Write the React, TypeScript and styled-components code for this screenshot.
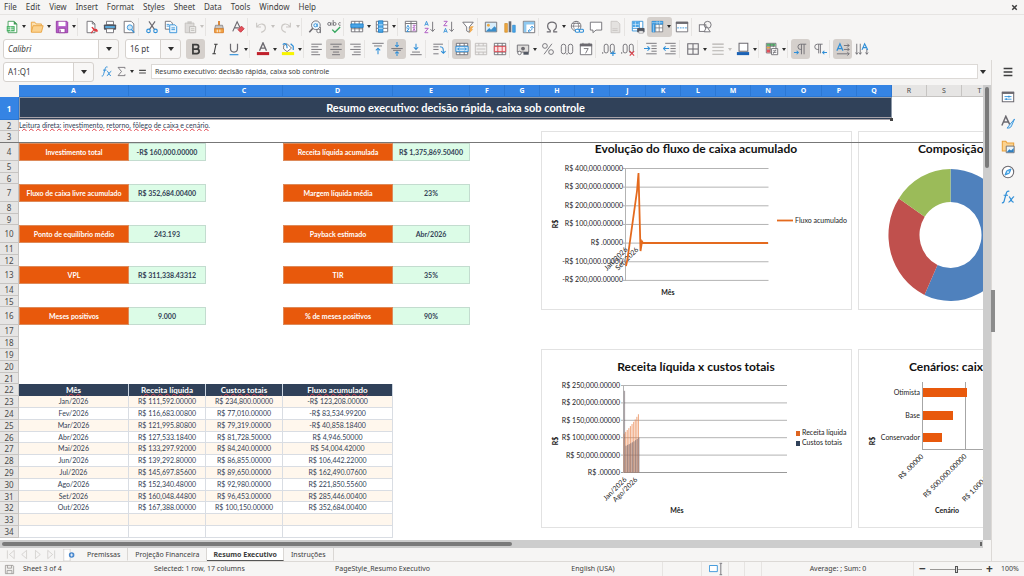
import React from "react";
import styled, { createGlobalStyle, css } from "styled-components";

const UI_FONT = '"Noto Sans", "Open Sans", sans-serif';
const CELL_FONT = 'Lato, "Open Sans", sans-serif';

const GlobalStyle = createGlobalStyle`
  * { box-sizing: border-box; }
  body { margin: 0; background: #f6f5f4; color: #3d3d3d; font-family: ${UI_FONT}; font-size: 8px; line-height: 12px; }
  button, input, select { font: inherit; color: inherit; margin: 0; }
`;

/* ---------- icons ---------- */

const G = "#6c6a70";
const B = "#2f8fd8";

const icons: Record<string, React.ReactNode> = {
  newDoc: (<><path d="M3.500 1.500h7l3 3v10h-10z" fill="#fff" stroke="#3f9a55" /><path d="M10 1l4 4h-4z" fill="#3f9a55" /><path d="M2 7h9v6H2z" fill="#3fae5c" /><path d="M3 9h7M3 11h7M6.500 7.500v5" stroke="#fff" strokeWidth=".8" /></>),
  open: (<><path d="M1.500 13.500v-11h4l1.500 2h6v2" fill="#fbe0b0" stroke="#e9a13b" /><path d="M3.500 6.500h11.500l-2 7.500h-11.500z" fill="#fbd28f" stroke="#e9a13b" /></>),
  save: (<><path d="M1.500 1.500h12l1 1v12h-13z" fill="#b45cc9" stroke="#93389f" /><path d="M4 2h8v5H4z" fill="#fff" /><path d="M4.500 9.500h7v5h-7z" fill="#fff" stroke="#93389f" /><path d="M6 11v3" stroke="#93389f" /></>),
  pdf: (<><path d="M3.500 14.500v-13h6l3 3v10z" fill="#fff" stroke={G} /><path d="M9.500 1.500v3h3" fill="none" stroke={G} /><path d="M8 15c4-5 6-5 7-3s-4 0-6-4" fill="none" stroke="#e0383e" strokeWidth="1.300" /></>),
  print: (<><path d="M4 1.500h8v4H4z" fill="#fff" stroke={G} /><rect x="1" y="5" width="14" height="6" rx="1" fill="#4f5560" /><path d="M2.500 8h11" stroke="#5cb5ec" strokeWidth="2" /><path d="M4 10h8v4.500H4z" fill="#fff" stroke={G} /></>),
  preview: (<><path d="M2.500 1.500h8l3 3v10h-11z" fill="#fff" stroke={G} /><circle cx="9" cy="8.500" r="3" fill="#cfe8f8" stroke={B} /><path d="M11 11l3 3.500" stroke={B} strokeWidth="1.500" /></>),
  cut: (<><path d="M4.500 1.500L11 11M11.500 1.500L5 11" stroke={G} strokeWidth="1.300" /><circle cx="4" cy="12.500" r="2" fill="none" stroke={B} strokeWidth="1.300" /><circle cx="12" cy="12.500" r="2" fill="none" stroke={B} strokeWidth="1.300" /></>),
  copy: (<><path d="M1.500 1.500h6l2 2v7h-8z" fill="#fff" stroke={G} /><path d="M6.500 5.500h6l2 2v7h-8z" fill="#e9f5fd" stroke={B} /><path d="M8.500 9h4M8.500 11h4M3 5h3M3 7h3" stroke={B} /></>),
  paste: (<><path d="M2.500 3.500h10v11h-10z" fill="#dddbd9" stroke="#c2c0bd" /><path d="M5 1.500h5v3H5z" fill="#c9c7c4" /><path d="M7.500 7.500h7v7h-7z" fill="#eeedeb" stroke="#bab8b5" /><path d="M9 10h4M9 12h4" stroke="#c2c0bd" /></>),
  clone: (<><path d="M8 1v5" stroke="#d97b22" strokeWidth="2" /><path d="M4 6h8l1 4H3z" fill="#c8c5c1" stroke={G} strokeWidth=".7" /><path d="M3 10h10v4.500H3z" fill="#f3a64a" stroke="#d97b22" /><path d="M6 11v3M9 11v3" stroke="#fff" /></>),
  clear: (<><path d="M2 13L7 2l4 8M4 9h5" fill="none" stroke={G} strokeWidth="1.300" /><path d="M8 11l4-4 3 3-4 4z" fill="#e4505a" stroke="#c4303a" /></>),
  undo: (<path d="M3 3v5h5M3.500 7.500C7 3 13 4 13 9c0 3-3 5-5 5" fill="none" stroke="#cbc8c5" strokeWidth="1.300" />),
  redo: (<path d="M13 3v5H8M12.500 7.500C9 3 3 4 3 9c0 3 3 5 5 5" fill="none" stroke="#cbc8c5" strokeWidth="1.300" />),
  find: (<><circle cx="9" cy="6" r="5" fill="#eef7fd" stroke={G} /><path d="M5.500 9.500L1.500 14" stroke={G} strokeWidth="1.800" /><circle cx="8.500" cy="6" r="1.800" fill="none" stroke={B} /><path d="M10.500 4v4" stroke={B} /><circle cx="12" cy="12.500" r="2" fill="#fff" stroke={G} /><path d="M14.200 8v7" stroke={G} /></>),
  spell: (<><circle cx="2.500" cy="4.500" r="1.700" fill="none" stroke={G} /><path d="M4.500 2.500v4M7 0v6.500" stroke={G} /><circle cx="8.700" cy="4.500" r="1.700" fill="none" stroke={G} /><path d="M15.500 3.200c-3-1.500-3 4 0 2.800" fill="none" stroke={G} /><path d="M6 11l3 3 6-6" fill="none" stroke="#38a860" strokeWidth="1.600" /></>),
  row: (<><path d="M1.500 1.500h13v12h-13zM1.500 10h13M5.500 1.500v12M10.500 1.500v12" fill="#fff" stroke={G} /><path d="M1 4.500h14v4H1z" fill="#4aa6e8" stroke="#1f7fc7" /></>),
  col: (<><path d="M1.500 1.500h13v12h-13zM1.500 5.500h13M1.500 9.500h13" fill="#fff" stroke={G} /><path d="M4 1h5v13H4z" fill="#4aa6e8" stroke="#1f7fc7" /><path d="M4 5.500h5M4 9.500h5" stroke="#bfe0f7" /></>),
  sort: (<><path d="M1.500 1.500h13v12h-13zM8 1.500v12M1.500 4h13" fill="#fff" stroke={G} /><path d="M3 9l1.500-3L6 9M3 10h3l-3 3h3" fill="none" stroke={B} /><path d="M10 6h3l-3 3h3M10 13l1.500-3L13 13" fill="none" stroke="#a94fc0" /></>),
  asc: (<><path d="M2 6.500L4 1.500l2 5M2.800 5h2.500" fill="none" stroke={B} /><path d="M2 9.500h4l-4 5h4" fill="none" stroke="#a94fc0" /><path d="M11 2v11M8.500 10.500L11 13l2.500-2.500" fill="none" stroke={G} /></>),
  desc: (<><path d="M2 1.500h4l-4 5h4" fill="none" stroke="#a94fc0" /><path d="M2 14.500l2-5 2 5M2.800 13h2.500" fill="none" stroke={B} /><path d="M11 2v11M8.500 10.500L11 13l2.500-2.500" fill="none" stroke={G} /></>),
  filter: (<><path d="M2 2.500h12L9.500 8v6l-3-1.500V8z" fill="#fff" stroke={G} /><path d="M11 7h3.500L12 10.500h2L9.500 15l1-3.500H9z" fill="#f2ab4e" /></>),
  image: (<><path d="M1.500 2.500h13v11h-13z" fill="#d8edfa" stroke={G} /><circle cx="5" cy="6" r="1.600" fill="#f0a840" /><path d="M2 13l4-4 2 2 4-4 2 2v4z" fill="#3a8ecb" /></>),
  chart: (<><path d="M2 4h3v10H2z" fill="#f0a840" stroke="#c98320" strokeWidth=".7" /><path d="M6.500 1.500h3V14h-3z" fill="#6a6a70" /><path d="M11 6h3v8h-3z" fill="#4aa6e8" stroke="#1f7fc7" strokeWidth=".7" /></>),
  pivot: (<><path d="M1.500 1.500h13v13h-13z" fill="#fff" stroke={G} /><path d="M2 2h12v3H2zM2 5h3v9H2z" fill="#8fc9f0" /><path d="M7.500 12.500c4 0 4-2 4-5M9.500 9l2-2 2 2M9 10.500l-2 2 2 2" fill="none" stroke={B} /></>),
  omega: (<path d="M2 13.500h4V12C1.500 9 2 2.500 8 2.500S14.500 9 10 12v1.500h4" fill="none" stroke={G} strokeWidth="1.300" />),
  link: (<><circle cx="7" cy="7" r="5.500" fill="#fff" stroke={G} /><path d="M1.500 7h11M7 1.500c-4 4-4 7 0 11M7 1.500c4 4 4 7 0 11M2.500 4h9" fill="none" stroke={G} strokeWidth=".8" /><rect x="6" y="10.500" width="5" height="3.500" rx="1.700" fill="#fff" stroke={B} strokeWidth="1.200" /><rect x="10.500" y="10.500" width="5" height="3.500" rx="1.700" fill="none" stroke={B} strokeWidth="1.200" /></>),
  comment: (<path d="M1.500 2.500h13v9H8L4.500 14.500v-3h-3z" fill="#fff" stroke={G} />),
  headerFooter: (<path d="M3.500 1.500h7l3 3v10h-10zM5 10h6M5 12h6" fill="#e4e2e0" stroke="#c9c6c3" />),
  printArea: (<><path d="M1.500 1.500h12v11h-12zM1.500 9.500h12M9.500 1.500v11" fill="#fff" stroke={B} /><path d="M2 2h7v6H2z" fill="#4aa6e8" /><path d="M5 2v6M2 5h7" stroke="#fff" strokeWidth=".6" /><rect x="7" y="9" width="8.500" height="5" rx="1" fill="#4f5560" /><path d="M9 12.500h5v2.500H9z" fill="#fff" stroke={G} strokeWidth=".6" /></>),
  freeze: (<><path d="M2.500 1.500h12v12h-12zM2.500 5h12M2.500 9h12M6.500 1.500v12M10.500 1.500v12" fill="#fff" stroke={G} strokeWidth=".8" /><path d="M2 1h13v4H6v9H2z" fill="#3d97dc" /><path d="M2 3h12M4 5v9M8 1v4M11 1v4" stroke="#b9dcf5" strokeWidth=".7" /></>),
  split: (<><path d="M1.500 2.500h13v11h-13z" fill="#fff" stroke={G} /><path d="M1 2h14v2.500H1z" fill={G} /><path d="M2.500 9h11" stroke={B} strokeDasharray="2 1" /></>),
  shapes: (<><rect x="1.500" y="5.500" width="7.500" height="7.500" fill="#fff" stroke={G} /><circle cx="11" cy="5.500" r="4" fill="none" stroke={G} /><path d="M7 13.500l3-6 4 6z" fill="#fff" stroke={G} /></>),

  bold: (<path d="M4.500 3h4a2.500 2.500 0 010 5h-4zM4.500 8h4.500a2.600 2.600 0 010 5.200H4.500z" fill="none" stroke="#3d3d3d" strokeWidth="2" />),
  italic: (<path d="M7 2.500h4M5 13.500h4M9.200 2.500L6.800 13.500" stroke="#3d3d3d" strokeWidth="1.200" fill="none" />),
  underline: (<><path d="M4 2v5.500a4 4 0 008 0V2" fill="none" stroke={G} strokeWidth="1.400" /><path d="M3 14.500h10" stroke={B} strokeWidth="1.300" /></>),
  fontColor: (<><path d="M4 10L8 1l4 9M5.500 7h5" fill="none" stroke={G} strokeWidth="1.600" /><path d="M1 11.500h14v3.500H1z" fill="#c0202c" /></>),
  highlight: (<><path d="M1 11.500h14v3.500H1z" fill="#f8f400" /><path d="M3 4l4-2 5 5-5 4-4-3z" fill="#fff" stroke={G} /><path d="M2 3c3-3 5 0 5 4M11 2l3 3v4" fill="none" stroke={B} strokeWidth="1.400" /></>),
  left: (<path d="M1.500 2.500h12M1.500 5.500h8M1.500 8.500h12M1.500 11.500h8M1.500 14.500h10" stroke={G} />),
  center: (<path d="M1.500 2.500h13M4.500 5.500h7M1.500 8.500h13M4.500 11.500h7M3.500 14.500h9" stroke={G} />),
  right: (<path d="M2.500 2.500h12M6.500 5.500h8M2.500 8.500h12M6.500 11.500h8M4.500 14.500h10" stroke={G} />),
  top: (<><path d="M1.500 1.500h13M3.500 4.500h9" stroke={G} /><path d="M8 14V7M5.500 9.500L8 7l2.500 2.500" fill="none" stroke={B} strokeWidth="1.200" /></>),
  middle: (<><path d="M1.500 7.500h13M3.500 9.500h9" stroke={G} /><path d="M8 0v5M6 3.500L8 5.500l2-2M8 16v-4M6 13l2-2 2 2" fill="none" stroke={B} strokeWidth="1.200" /></>),
  bottom: (<><path d="M1.500 14.500h13M3.500 11.500h9" stroke={G} /><path d="M8 2v6M5.500 6L8 8.500 10.500 6" fill="none" stroke={B} strokeWidth="1.200" /></>),
  wrap: (<><path d="M1.500 2.500h11M1.500 5.500h6M1.500 8.500h6M1.500 13.500h6" stroke={G} /><path d="M9 5.500c4 0 4 2 4 7M10.500 10.500L13 13l2.500-2.500" fill="none" stroke={B} strokeWidth="1.200" /></>),
  mergeCenter: (<><path d="M1.500 1.500h13v13h-13zM1.500 4.500h13M1.500 11.500h13M5.500 1.500v3M10.500 1.500v3M5.500 11.500v3M10.500 11.500v3" fill="#fff" stroke={G} /><path d="M1 5h14v6H1z" fill="#d4ebfa" stroke={B} /><path d="M3 8h10M5 6.500L3 8l2 1.500M11 6.500L13 8l-2 1.500" fill="none" stroke={B} /></>),
  merge: (<path d="M1.500 1.500h13v13h-13zM1.500 4.500h13M1.500 11.500h13M5.500 1.500v3M10.500 1.500v3M5.500 11.500v3M10.500 11.500v3M3 8h10" fill="#f1f0ef" stroke="#bfbcb9" />),
  unmerge: (<><path d="M1.500 1.500h13v13h-13zM1.500 4.500h13M1.500 11.500h13M5.500 1.500v3M10.500 1.500v3M5.500 11.500v3M10.500 11.500v3" fill="#fff" stroke={G} /><path d="M1.500 5h13v6h-13zM5.500 5v6M10.500 5v6" fill="#fbe0e0" stroke="#d9404a" /></>),
  currency: (<><path d="M1.500 3.500h13v8h-13z" fill="#e0dedc" stroke={G} /><circle cx="8" cy="7.500" r="2.200" fill={G} /><path d="M8.500 11.500h6v3h-6z" fill="#4f5560" /><circle cx="4" cy="12.500" r="2" fill="#fff" stroke={G} /></>),
  percent: (<><circle cx="4.500" cy="4.500" r="2.700" fill="none" stroke={G} /><circle cx="11.500" cy="11.500" r="2.700" fill="none" stroke={G} /><path d="M12.500 2l-9 12" stroke={G} /></>),
  number: (<><rect x="1.500" y="2.500" width="5" height="11" rx="2.500" fill="none" stroke={G} /><rect x="9.500" y="2.500" width="5" height="11" rx="2.500" fill="none" stroke={G} /><path d="M8 12.500v2" stroke={G} /></>),
  date: (<><path d="M1.500 2.500h13v12h-13z" fill="#fff" stroke={G} /><path d="M1 2h14v3H1z" fill={G} /><path d="M5.500 7.500h5l-3 5.500M4.500 1v2M11.500 1v2" fill="none" stroke={G} /></>),
  addDec: (<><path d="M.8 11.500v2" stroke={G} /><rect x="2.500" y="2.500" width="4.500" height="10" rx="2.200" fill="none" stroke={G} /><rect x="9.500" y="2.500" width="4.500" height="10" rx="2.200" fill="none" stroke={G} /><path d="M12.500 10v6M9.500 13h6" stroke={B} strokeWidth="1.300" /></>),
  delDec: (<><path d="M.8 11.500v2" stroke={G} /><rect x="2.500" y="2.500" width="4.500" height="10" rx="2.200" fill="none" stroke={G} /><rect x="9.500" y="2.500" width="4.500" height="10" rx="2.200" fill="none" stroke={G} /><path d="M10 10.500l5 5M15 10.500l-5 5" stroke="#d9404a" strokeWidth="1.300" /></>),
  indent: (<><path d="M2.500 1.500h12M8.500 4.500h6M8.500 7.500h6M8.500 10.500h6M2.500 13.500h12" stroke={G} /><path d="M0 7.500h6M4 5l2.500 2.500L4 10" fill="none" stroke={B} strokeWidth="1.200" /></>),
  outdent: (<><path d="M2.500 1.500h12M8.500 4.500h6M8.500 7.500h6M8.500 10.500h6M2.500 13.500h12" stroke={G} /><path d="M7 7.500H1M3 5L.5 7.500 3 10" fill="none" stroke={B} strokeWidth="1.200" /></>),
  borders: (<path d="M2 2h12v12H2zM8 2v12M2 8h12" fill="none" stroke={G} strokeWidth="1.200" />),
  lineStyle: (<path d="M1.500 2.500h13M1.500 6h13M1.500 10h13M1.500 14h13" stroke="#b5b2af" strokeWidth="1.400" />),
  borderColor: (<><path d="M3.500 1.500h10v9h-10z" fill="#fff" stroke={G} strokeWidth="1.200" /><path d="M1 11.500h14v3.500H1z" fill="#1b62b5" /></>),
  conditional: (<><path d="M1.500 1.500h11v11h-11z" fill="#fff" stroke={G} /><path d="M2 2h10v2.500H2z" fill="#57b46e" /><path d="M2 5.500h4v2H2z" fill="#f0a840" /><path d="M2 8.500h4v3.500H2z" fill="#e4505a" /><path d="M6 2v10M9.500 2v4M2 8h5M2 5h10" stroke={G} strokeWidth=".8" /><path d="M7.500 7.500h7v7h-7z" fill="#fff" stroke={G} /><path d="M9 10h4M9 12h4M12.500 8.500l-3 5" stroke={G} strokeWidth=".8" /></>),
  ltr: (<><path d="M8.500 14V2.500M11.500 14V2.500M14 2.500H7.500a3 3 0 000 6h1" fill="none" stroke={G} /><path d="M0 12h5M3 10l2 2-2 2" fill="none" stroke={B} strokeWidth="1.200" /></>),
  rtl: (<><path d="M6.500 13V2.500M8.500 13V2.500M11 2.500H5a3 3 0 000 6h1.500" fill="none" stroke={G} /><path d="M16 12h-5M13 10l-2 2 2 2" fill="none" stroke={B} strokeWidth="1.200" /></>),
  textHoriz: (<><path d="M1 10L4.500 2 8 10M2.300 7.500h4.500" fill="none" stroke={B} strokeWidth="1.400" /><path d="M9 4h6M13 2l2 2-2 2M9 8.500h6M13 6.500l2 2-2 2M1 13.500h14M13 11.500l2 2-2 2" fill="none" stroke={G} /></>),
  textVert: (<><path d="M2 2v12M.5 12L2 14l1.500-2M6 2v12M4.500 12L6 14l1.500-2M13.500 8v6M12 12l1.500 2 1.500-2" fill="none" stroke={G} /><path d="M8 9l3-7 3.500 7M9.200 6.500h4" fill="none" stroke={B} strokeWidth="1.300" /></>),

  burger: (<path d="M3 4h10M3 8h10M3 12h10" stroke="#3d3d3d" strokeWidth="1.600" />),
  properties: (<><path d="M1.500 2.500h13v11h-13z" fill="#fff" stroke={G} strokeWidth="1.200" /><path d="M1 2h14v2.500H1z" fill={G} /><path d="M4 7.500h8M4 10.500h8" stroke={B} /><path d="M9 6.500v2M6 9.500v2" stroke={B} strokeWidth="1.400" /></>),
  styles: (<><path d="M1 12L5.500 1.500 10 11M3 8h5.500" fill="none" stroke={G} strokeWidth="1.700" /><path d="M15.500 4.500L10 11l-3 4c3 0 4-.5 5-2.500z" fill="#d4ebfa" stroke={B} /></>),
  gallery: (<><path d="M1.500 12.500v-11h4l1.500 2h7.500v9z" fill="#fbd28f" stroke="#e9a13b" strokeWidth="1.200" /><path d="M6 7h9v7.500H6z" fill="#e9f5fd" stroke={G} /><path d="M6.500 14l3-3.500 2 1.500 3-3v5z" fill="#2f7fc0" /></>),
  navigator: (<><circle cx="8" cy="8" r="6.500" fill="#fff" stroke={G} strokeWidth="1.200" /><path d="M11.500 4.500L9.500 9.500 4.500 11.500 6.500 6.500z" fill="#5cb5ec" stroke={B} /><circle cx="8" cy="8" r="1" fill="#fff" /></>),
  fx: (<path d="M1 14.500c2 .5 2.500-1 3-3.500L6 4c.5-2.500 1.500-3 3.500-2.500M3 6h5M9 7.500c2 0 2 6.500 5.500 6.500M15 7.500c-2 0-4 6.500-6.500 6.500" fill="none" stroke={B} strokeWidth="1.400" />),
  sum: (<path d="M13 4V2H3l5 6-5 6h10v-2" fill="none" stroke={G} strokeWidth="1.200" />),
  equals: (<path d="M2 6h12M2 10.500h12" stroke="#4a4a4a" strokeWidth="1.800" />),
  diskGrey: (<><path d="M2 2h11l1 1v11H2z" fill="#efeeec" stroke="#8d8a87" /><path d="M5 2v4h6V2M4.500 14V9.500h7V14" fill="none" stroke="#8d8a87" /></>),
  first: (<path d="M2 2v12M12 2L5 8l7 6z" fill="none" stroke="#c9c6c3" />),
  prev: (<path d="M11 2L4 8l7 6z" fill="none" stroke="#c9c6c3" />),
  next: (<path d="M5 2l7 6-7 6z" fill="none" stroke="#c9c6c3" />),
  last: (<path d="M14 2v12M4 2l7 6-7 6z" fill="none" stroke="#c9c6c3" />),
  addSheet: (<><path d="M1 0h8.500v16H1z" fill="#fff" stroke="#cfccc9" /><circle cx="11.500" cy="8" r="3.700" fill="#4384cc" /><path d="M9.500 8h4M11.500 6v4" stroke="#fff" strokeWidth="1.100" /></>),
  selectMode: (<><path d="M.5 4h9v7h-9z" fill="#fff" stroke={B} /><path d="M13.500 2v12M12 1.500h3M12 14.500h3" stroke={G} fill="none" /></>),
  close: (<path d="M4 4l8 8M12 4l-8 8" stroke="#3d3d3d" strokeWidth="2.600" />),
};

const IconSvg = styled.svg<{ $size: number }>`
  display: block;
  flex: none;
  width: ${(p) => p.$size}px;
  height: ${(p) => p.$size}px;
`;

const Icon = ({ name, size = 14 }: { name: string; size?: number }) => (
  <IconSvg $size={size} viewBox="0 0 16 16" aria-hidden="true">{icons[name]}</IconSvg>
);

/* ---------- chrome ---------- */

const Shell = styled.div`
  display: flex;
  flex-direction: column;
  height: 100vh;
  overflow: hidden;
`;

const MenuBar = styled.nav`
  display: flex;
  align-items: center;
  height: 15px;
  padding-right: 5px;
  border-bottom: 1px solid #e6e4e2;
`;

const MenuItem = styled.button`
  border: 0;
  background: none;
  padding: 0 5px 0 4px;
  line-height: 14px;
`;

const PlainButton = styled.button`
  display: flex;
  align-items: center;
  justify-content: center;
  padding: 0;
  border: 0;
  background: none;
`;

const CloseButton = styled(PlainButton)`
  margin-left: auto;
`;

const ToolBar = styled.div<{ $h: number }>`
  display: flex;
  align-items: center;
  height: ${(p) => p.$h}px;
  flex: none;
  padding-left: 2px;
`;

const ToolButton = styled(PlainButton)<{ $active?: boolean; $split?: boolean }>`
  width: 19px;
  height: 20px;
  flex: none;
  border-radius: ${(p) => (p.$split ? "3px 0 0 3px" : "3px")};
  ${(p) => p.$active && css`background: #d5d0cc;`}
`;

const CaretButton = styled(PlainButton)<{ $active?: boolean; $faint?: boolean }>`
  width: 6px;
  height: 20px;
  flex: none;
  border-radius: 0 3px 3px 0;
  ${(p) => p.$active && css`background: #d5d0cc;`}
  &::after {
    content: "";
    border: 2px solid transparent;
    border-top: 3px solid ${(p) => (p.$faint ? "#c4c1be" : "#2e2e2e")};
    border-bottom: 0;
  }
`;

const Separator = styled.span`
  width: 4px;
  height: 18px;
  flex: none;
  border-left: 1px solid #e6e4e2;
`;

type Tool = [name: string, label: string, flags?: string];

/* flags: c = has a menu caret, a = pressed, f = faint caret */
const standardTools: (Tool | "|")[] = [
  ["newDoc", "New", "c"], ["open", "Open", "c"], ["save", "Save", "c"], "|",
  ["pdf", "Export as PDF"], ["print", "Print"], ["preview", "Print preview"], "|",
  ["cut", "Cut"], ["copy", "Copy"], ["paste", "Paste", "cf"], "|",
  ["clone", "Clone formatting"], ["clear", "Clear formatting"], "|",
  ["undo", "Undo", "cf"], ["redo", "Redo", "cf"], "|",
  ["find", "Find and replace"], ["spell", "Spelling"], "|",
  ["row", "Row", "c"], ["col", "Column", "c"], "|",
  ["sort", "Sort"], ["asc", "Sort ascending"], ["desc", "Sort descending"], ["filter", "AutoFilter"], "|",
  ["image", "Insert image"], ["chart", "Insert chart"], ["pivot", "Pivot table"], "|",
  ["omega", "Special character", "c"], ["link", "Hyperlink"], ["comment", "Comment"], ["headerFooter", "Headers and footers"], "|",
  ["printArea", "Define print area"], ["freeze", "Freeze rows and columns", "ca"], ["split", "Split window"], "|",
  ["shapes", "Draw functions"],
];

const formatTools: (Tool | "|")[] = [
  ["bold", "Bold", "a"], ["italic", "Italic"], ["underline", "Underline", "c"], "|",
  ["fontColor", "Font color", "c"], ["highlight", "Background color", "c"], "|",
  ["left", "Align left"], ["center", "Center horizontally", "a"], ["right", "Align right"], "|",
  ["top", "Align top"], ["middle", "Center vertically", "a"], ["bottom", "Align bottom"], "|",
  ["wrap", "Wrap text"], "|",
  ["mergeCenter", "Merge and center", "a"], ["merge", "Merge cells"], ["unmerge", "Unmerge cells"], "|",
  ["currency", "Currency", "c"], ["percent", "Percent"], ["number", "Number"], ["date", "Date"], "|",
  ["addDec", "Add decimal place"], ["delDec", "Delete decimal place"], "|",
  ["indent", "Increase indent"], ["outdent", "Decrease indent"], "|",
  ["borders", "Borders", "c"], ["lineStyle", "Border style", "cf"], ["borderColor", "Border color", "c"], "|",
  ["conditional", "Conditional formatting", "c"], "|",
  ["ltr", "Left to right", "a"], ["rtl", "Right to left"], "|",
  ["textHoriz", "Text direction horizontal", "a"], ["textVert", "Text direction vertical"],
];

const Tools = ({ items }: { items: (Tool | "|")[] }) => (
  <>
    {items.map((item, i) => {
      if (item === "|") return <Separator key={i} />;
      const [name, label, flags = ""] = item;
      const active = flags.includes("a");
      const caret = flags.includes("c");
      return (
        <React.Fragment key={i}>
          <ToolButton aria-label={label} $active={active} $split={caret}><Icon name={name} /></ToolButton>
          {caret && <CaretButton aria-label={`${label} options`} $active={active} $faint={flags.includes("f")} />}
        </React.Fragment>
      );
    })}
  </>
);

const Combo = styled.label<{ $w: number; $italic?: boolean }>`
  position: relative;
  display: flex;
  width: ${(p) => p.$w}px;
  height: 20px;
  flex: none;
  margin: 0 5px 0 1px;
  border: 1px solid #d6d2ce;
  border-radius: 3px;
  background: linear-gradient(to left, #f8f7f6 19px, #d6d2ce 19px, #d6d2ce 20px, #fff 20px);
  select {
    appearance: none;
    flex: 1;
    min-width: 0;
    padding: 0 4px;
    border: 0;
    background: none;
    font-style: ${(p) => (p.$italic ? "italic" : "normal")};
  }
  &::after {
    content: "";
    position: absolute;
    right: 6px;
    top: 7px;
    border: 3px solid transparent;
    border-top: 4px solid #2e2e2e;
    border-bottom: 0;
    pointer-events: none;
  }
`;

const Body = styled.div`
  display: flex;
  flex: 1;
  min-height: 0;
`;

const Main = styled.main`
  display: flex;
  flex-direction: column;
  flex: 1;
  min-width: 0;
`;

const FormulaBar = styled(ToolBar)`
  padding: 0 3px 2px 2px;
`;

const FormulaInput = styled.input`
  flex: 1;
  min-width: 0;
  height: 15px;
  margin-left: 1px;
  padding: 0 3px;
  border: 1px solid #dcd9d6;
  background: #fff;
  font-size: 7px;
`;

const FormulaButton = styled(PlainButton)`
  width: 15px;
  height: 20px;
  flex: none;
`;

const ExpandButton = styled(PlainButton)`
  width: 10px;
  height: 14px;
  &::after {
    content: "";
    border: 3px solid transparent;
    border-top: 4px solid #2e2e2e;
    border-bottom: 0;
  }
`;

/* ---------- sheet ---------- */

const SheetArea = styled.div`
  display: flex;
  flex: 1;
  min-height: 0;
`;

const Viewport = styled.div`
  position: relative;
  flex: 1;
  min-width: 0;
  overflow: hidden;
  background: #fff;
`;

/* the 1px width makes the fixed layout take exactly the sum of the columns */
const Grid = styled.table`
  table-layout: fixed;
  width: 1px;
  border-collapse: separate;
  border-spacing: 0;
  font-family: ${CELL_FONT};
  font-size: 7px;
  line-height: 9px;
  th, td { padding: 0; overflow: hidden; white-space: nowrap; text-align: center; }
`;

const Col = styled.col<{ $w: number }>`
  width: ${(p) => p.$w}px;
`;

const GridRow = styled.tr<{ $h: number }>`
  height: ${(p) => p.$h}px;
`;

const HeadCell = styled.th<{ $on?: boolean; $row?: boolean }>`
  font-family: ${UI_FONT};
  font-size: ${(p) => (p.$row ? 8 : 7)}px;
  font-weight: ${(p) => (p.$on ? 700 : 400)};
  color: ${(p) => (p.$on ? "#fff" : "#4a4a4a")};
  background: ${(p) => (p.$on ? "#3584e4" : "#e6e5e4")};
  border-right: 1px solid ${(p) => (p.$on ? "#2c78d4" : "#c6c4c2")};
  border-bottom: 1px solid ${(p) => (p.$on ? "#2c78d4" : "#c6c4c2")};
`;

const Corner = styled.th`
  background: #f6f5f4;
`;

type Kind = "plain" | "title" | "note" | "label" | "value" | "head" | "body" | "stripe";

const kinds: Record<Kind, ReturnType<typeof css>> = {
  plain: css``,
  title: css`
    background: #304159;
    color: #fff;
    font-weight: 700;
    font-size: 11px;
    line-height: 18px;
    border: 1px solid #8e99a8;
    border-bottom: 3px double #a8a2a8;
  `,
  note: css`
    && { text-align: left; }
    color: #334155;
  `,
  label: css`background: #e8590c; color: #fff; font-weight: 700; border: 1px solid #dd8a5a;`,
  value: css`background: #dcfce7; color: #334155; font-weight: 700; border: 1px solid #c3dccf; border-left: 0;`,
  head: css`background: #304159; color: #fff; font-weight: 700; font-size: 8px; border-right: 1px solid #cbd5e1;`,
  body: css`background: #fff; border-right: 1px solid #d9dde3; border-bottom: 1px solid #d9dde3;`,
  stripe: css`background: #fff7ed; border-right: 1px solid #d9dde3; border-bottom: 1px solid #d9dde3;`,
};

const Cell = styled.td<{ $kind: Kind }>`
  color: #334155;
  ${(p) => kinds[p.$kind]}
`;

const Misspelled = styled.span`
  text-decoration: underline wavy #e0404a 1px;
  text-decoration-skip-ink: none;
  text-underline-offset: 0;
`;

const FreezeLine = styled.div`
  position: absolute;
  left: 0;
  right: 0;
  top: 57px;
  height: 1px;
  background: #777;
`;

const SelectionHandle = styled.div`
  position: absolute;
  left: 890px;
  top: 33px;
  width: 3px;
  height: 3px;
  background: #444;
`;

const ChartPanel = styled.figure<{ $x: number; $y: number }>`
  position: absolute;
  left: ${(p) => p.$x}px;
  top: ${(p) => p.$y}px;
  margin: 0;
  background: #fff;
  svg { display: block; font-family: ${CELL_FONT}; font-size: 7px; fill: #222; }
`;

const columnNames = "ABCDEFGHIJKLMNOPQRST".split("");
const columnWidths = [110, 77, 77, 110, 77].concat(
  columnNames.slice(5).map((_, i) => (i % 5 === 4 ? 36 : 35)),
);

const rowHeight = (n: number) => {
  if (n === 1) return 23;
  if (n === 2) return 11;
  if (n === 3) return 12;
  if (n <= 16) return (n - 4) % 3 === 0 ? 18 : n % 3 === 2 ? 12 : 11;
  return (n - 16) % 5 === 0 ? 11 : 12;
};

type Entry = [string, Kind];
const cells: Record<string, Entry> = {};
const kpis: [number, string, string, string, string][] = [
  [4, "Investimento total", "-R$ 160,000.00000", "Receita líquida acumulada", "R$ 1,375,869.50400"],
  [7, "Fluxo de caixa livre acumulado", "R$ 352,684.00400", "Margem líquida média", "23%"],
  [10, "Ponto de equilíbrio médio", "243.193", "Payback estimado", "Abr/2026"],
  [13, "VPL", "R$ 311,338.43312", "TIR", "35%"],
  [16, "Meses positivos", "9.000", "% de meses positivos", "90%"],
];
kpis.forEach(([r, a, b, d, e]) => {
  cells[`A${r}`] = [a, "label"];
  cells[`B${r}`] = [b, "value"];
  cells[`D${r}`] = [d, "label"];
  cells[`E${r}`] = [e, "value"];
});
const monthly = [
  ["Jan/2026", "R$ 111,592.00000", "R$ 234,800.00000", "-R$ 123,208.00000"],
  ["Fev/2026", "R$ 116,683.00800", "R$ 77,010.00000", "-R$ 83,534.99200"],
  ["Mar/2026", "R$ 121,995.80800", "R$ 79,319.00000", "-R$ 40,858.18400"],
  ["Abr/2026", "R$ 127,533.18400", "R$ 81,728.50000", "R$ 4,946.50000"],
  ["Mai/2026", "R$ 133,297.92000", "R$ 84,240.00000", "R$ 54,004.42000"],
  ["Jun/2026", "R$ 139,292.80000", "R$ 86,855.00000", "R$ 106,442.22000"],
  ["Jul/2026", "R$ 145,697.85600", "R$ 89,650.00000", "R$ 162,490.07600"],
  ["Ago/2026", "R$ 152,340.48000", "R$ 92,980.00000", "R$ 221,850.55600"],
  ["Set/2026", "R$ 160,048.44800", "R$ 96,453.00000", "R$ 285,446.00400"],
  ["Out/2026", "R$ 167,388.00000", "R$ 100,150.00000", "R$ 352,684.00400"],
];
["Mês", "Receita líquida", "Custos totais", "Fluxo acumulado"].forEach((t, c) => {
  cells[`${columnNames[c]}22`] = [t, "head"];
});
for (let i = 0; i < 12; i++) {
  for (let c = 0; c < 4; c++) {
    cells[`${columnNames[c]}${23 + i}`] = [monthly[i]?.[c] ?? "", i % 2 ? "body" : "stripe"];
  }
}

const Spreadsheet = () => (
  <Grid>
    <colgroup>
      <Col $w={19} />
      {columnWidths.map((w, i) => <Col key={i} $w={w} />)}
    </colgroup>
    <thead>
      <GridRow $h={12}>
        <Corner />
        {columnNames.map((n, i) => <HeadCell key={n} scope="col" $on={i < 17}>{n}</HeadCell>)}
      </GridRow>
    </thead>
    <tbody>
      {Array.from({ length: 34 }, (_, i) => i + 1).map((r) => (
        <GridRow key={r} $h={rowHeight(r)}>
          <HeadCell scope="row" $row $on={r === 1}>{r}</HeadCell>
          {r === 1 && (
            <Cell $kind="title" colSpan={17}>Resumo executivo: decisão rápida, caixa sob controle</Cell>
          )}
          {r === 2 && (
            <Cell $kind="note" colSpan={4}><Misspelled>Leitura direta: investimento, retorno, fôlego de caixa e cenário.</Misspelled></Cell>
          )}
          {columnNames.slice(r === 1 ? 17 : r === 2 ? 4 : 0).map((c) => {
            const [text, kind] = cells[`${c}${r}`] ?? ["", "plain"];
            return (
              <Cell key={c} $kind={kind as Kind}>
                {kind === "head" ? <Misspelled>{text}</Misspelled> : text}
              </Cell>
            );
          })}
        </GridRow>
      ))}
    </tbody>
  </Grid>
);

/* ---------- charts ---------- */

const Frame = ({ title, start }: { title: string; start?: number }) => (
  <>
    <rect x=".5" y=".5" width="310" height="178" fill="#fff" stroke="#e2e2e2" />
    <text x={start ?? 155} y="22" textAnchor={start ? "start" : "middle"} fontSize="12" fontWeight="700" fill="#111">{title}</text>
  </>
);

const AxisTitle = ({ x, y, children, up }: { x: number; y: number; children: string; up?: boolean }) => (
  <text x={x} y={y} textAnchor="middle" fontWeight="700" transform={up ? `rotate(-90 ${x} ${y})` : undefined}>{children}</text>
);

const Slanted = ({ x, y, children }: { x: number; y: number; children: string }) => (
  <text x={x} y={y} textAnchor="end" transform={`rotate(-45 ${x} ${y})`}>{children}</text>
);

const CashFlowChart = () => (
  <ChartPanel $x={541} $y={46}>
    <svg width="311" height="179" role="img" aria-label="Evolução do fluxo de caixa acumulado">
      <Frame title="Evolução do fluxo de caixa acumulado" />
      {["R$ 400,000.00000", "R$ 300,000.00000", "R$ 200,000.00000", "R$ 100,000.00000", "R$ .00000", "-R$ 100,000.00000", "-R$ 200,000.00000"].map((t, i) => (
        <g key={t}>
          <path d={`M82 ${37.5 + i * 18.65}H227.500`} stroke="#b3b3b3" />
          <text x="82" y={39.5 + i * 18.65} textAnchor="end">{t}</text>
        </g>
      ))}
      <path d="M84.500 37v113" stroke="#b3b3b3" />
      <Slanted x={87} y={119}>Jan/2026</Slanted>
      <Slanted x={98} y={119}>Set/2026</Slanted>
      <path d="M85 135L86.500 128 96 60 97.500 42 99.500 120 101 110.500 102 112H227" fill="none" stroke="#e46a1e" strokeWidth="1.800" />
      <path d="M236 89.500h16" stroke="#e46a1e" strokeWidth="1.800" />
      <text x="254" y="92">Fluxo acumulado</text>
      <AxisTitle x={17} y={93} up>R$</AxisTitle>
      <AxisTitle x={127} y={164}>Mês</AxisTitle>
    </svg>
  </ChartPanel>
);

const point = (deg: number, r: number) => {
  const a = (deg * Math.PI) / 180;
  return `${(Math.sin(a) * r).toFixed(2)} ${(-Math.cos(a) * r).toFixed(2)}`;
};
const slice = (from: number, to: number) => {
  const large = to - from > 180 ? 1 : 0;
  return `M${point(from, 66)}A66 66 0 ${large} 1 ${point(to, 66)}L${point(to, 33)}A33 33 0 ${large} 0 ${point(from, 33)}Z`;
};

const CostChart = () => (
  <ChartPanel $x={858} $y={46}>
    <svg width="311" height="179" role="img" aria-label="Composição dos custos">
      <Frame title="Composição dos custos" start={60} />
      <g transform="translate(92.500 104) scale(.94 1)">
        <path d={slice(0, 204.8)} fill="#4f81bd" />
        <path d={slice(204.8, 303.7)} fill="#c0504d" />
        <path d={slice(303.7, 360)} fill="#9bbb59" />
      </g>
    </svg>
  </ChartPanel>
);

const revenue = [111.6, 116.7, 122, 127.5, 133.3, 139.3, 145.7, 152.3, 160, 167.4];
const costs = [234.8, 77, 79.3, 81.7, 84.2, 86.9, 89.7, 93, 96.5, 100.2];

const RevenueChart = () => (
  <ChartPanel $x={541} $y={264}>
    <svg width="311" height="179" role="img" aria-label="Receita líquida x custos totais">
      <Frame title="Receita líquida x custos totais" />
      {["R$ 250,000.00000", "R$ 200,000.00000", "R$ 150,000.00000", "R$ 100,000.00000", "R$ 50,000.00000", "R$ .00000"].map((t, i) => (
        <g key={t}>
          <path d={`M80 ${36.5 + i * 17.4}H246`} stroke={i === 5 ? "#999" : "#b3b3b3"} />
          <text x="79" y={39 + i * 17.4} textAnchor="end">{t}</text>
        </g>
      ))}
      <path d="M82.500 36v88" stroke="#b3b3b3" />
      {revenue.map((v, i) => (
        <g key={v}>
          <rect x={82.5 + i * 1.6} y={123.5 - v * 0.348} width="1.100" height={v * 0.348} fill="#e8834a" opacity=".65" />
          <rect x={82.8 + i * 1.6} y={123.5 - costs[i] * 0.348} width="1.300" height={costs[i] * 0.348} fill="#75686e" opacity=".6" />
        </g>
      ))}
      <Slanted x={86} y={131}>Jan/2026</Slanted>
      <Slanted x={97} y={131}>Ago/2026</Slanted>
      <rect x="255" y="82" width="4" height="5" fill="#dd6420" />
      <text x="261" y="86">Receita líquida</text>
      <rect x="255" y="92" width="4" height="5" fill="#304159" />
      <text x="261" y="96">Custos totais</text>
      <AxisTitle x={17} y={92} up>R$</AxisTitle>
      <AxisTitle x={136} y={164}>Mês</AxisTitle>
    </svg>
  </ChartPanel>
);

const ScenarioChart = () => (
  <ChartPanel $x={858} $y={264}>
    <svg width="311" height="179" role="img" aria-label="Cenários: caixa acumulado">
      <Frame title="Cenários: caixa acumulado" start={51} />
      <path d="M64.500 33v68M107.500 33v68M150.500 33v68M64 100.500h130" fill="none" stroke="#a6a6a6" />
      {([["Otimista", 44, 39], ["Base", 30, 62], ["Conservador", 19, 84]] as [string, number, number][]).map(([t, w, y]) => (
        <g key={t}>
          <rect x="65" y={y} width={w} height="9" fill="#e8590c" />
          <text x="62" y={y + 7} textAnchor="end">{t}</text>
        </g>
      ))}
      <Slanted x={66} y={108}>R$ .00000</Slanted>
      <Slanted x={109} y={108}>R$ 500,000.00000</Slanted>
      <Slanted x={152} y={108}>R$ 1,000,000.00000</Slanted>
      <AxisTitle x={17} y={92} up>R$</AxisTitle>
      <AxisTitle x={89} y={164}>Cenário</AxisTitle>
    </svg>
  </ChartPanel>
);

/* ---------- scrollbars, tabs, sidebar, status ---------- */

const VerticalScroll = styled.div`
  width: 8px;
  flex: none;
  padding: 2px;
  background: #cdcdcd;
  &::before {
    content: "";
    display: block;
    height: 18%;
    border-radius: 2px;
    background: #7a7a7a;
  }
`;

const HorizontalScroll = styled.div`
  display: flex;
  height: 8px;
  flex: none;
  margin-right: 8px;
  padding: 2px 1px 2px 2px;
  background: #cdcdcd;
  justify-content: space-between;
  &::before {
    content: "";
    width: 52%;
    border-radius: 2px;
    background: #7a7a7a;
  }
  &::after {
    content: "";
    width: 2px;
    background: #666;
  }
`;

const TabBar = styled.div`
  display: flex;
  height: 13px;
  flex: none;
  align-items: stretch;
  padding-left: 5px;
`;

const NavButton = styled(PlainButton)`
  width: 13px;
`;

const AddSheetButton = styled(PlainButton)`
  width: 12px;
  margin: 0 5px 0 6px;
`;

const Tab = styled.button<{ $active?: boolean }>`
  padding: 0 7px;
  border: 0;
  border-right: 1px solid #dad7d4;
  border-bottom: 1px solid transparent;
  background: none;
  font-size: 7px;
  line-height: 11px;
  ${(p) => p.$active && css`
    padding: 0 6px;
    font-weight: 700;
    background: #fff;
    border-bottom-color: #555;
  `}
`;

const Sidebar = styled.aside`
  position: relative;
  display: flex;
  flex-direction: column;
  align-items: center;
  width: 33px;
  flex: none;
  padding-top: 3px;
  gap: 7px;
  border-left: 1px solid #dcd9d6;
`;

const SideButton = styled(PlainButton)`
  width: 20px;
  height: 18px;
`;

const SideGrip = styled.div`
  position: absolute;
  left: -1px;
  top: 50%;
  width: 4px;
  height: 42px;
  margin-top: -21px;
  background: #8c8c8c;
`;

const StatusBar = styled.footer`
  display: flex;
  align-items: center;
  height: 15px;
  flex: none;
  border-top: 1px solid #dcd9d6;
  font-size: 7px;
  padding-left: 4px;
`;

const StatusField = styled.span<{ $grow: number; $center?: boolean; $line?: boolean }>`
  display: flex;
  align-items: center;
  justify-content: ${(p) => (p.$center ? "center" : "flex-start")};
  flex: ${(p) => p.$grow} 1 0;
  min-width: 0;
  height: 14px;
  white-space: nowrap;
  ${(p) => p.$line && css`box-shadow: inset -1px 0 #e6e4e2;`}
`;

const ZoomGroup = styled.div`
  display: flex;
  align-items: center;
  width: 110px;
  flex: none;
  padding-left: 5px;
  gap: 4px;
`;

const ZoomStep = styled(PlainButton)`
  width: 7px;
  font-size: 12px;
  font-weight: 700;
`;

const ZoomSlider = styled.input`
  appearance: none;
  width: 52px;
  height: 9px;
  background: linear-gradient(#9a9896, #9a9896) center / 100% 1px no-repeat;
  &::-webkit-slider-thumb {
    appearance: none;
    width: 3px;
    height: 7px;
    border: 1px solid #555;
    background: #ddd;
  }
`;

const ZoomValue = styled.span`
  margin-left: 4px;
`;

const menus = ["File", "Edit", "View", "Insert", "Format", "Styles", "Sheet", "Data", "Tools", "Window", "Help"];
const panels: [string, string][] = [
  ["burger", "Sidebar settings"], ["properties", "Properties"], ["styles", "Styles"],
  ["gallery", "Gallery"], ["navigator", "Navigator"], ["fx", "Functions"],
];

export default function App() {
  return (
    <Shell>
      <GlobalStyle />
      <MenuBar aria-label="Main menu">
        {menus.map((m) => <MenuItem key={m}>{m}</MenuItem>)}
        <CloseButton aria-label="Close document"><Icon name="close" size={9} /></CloseButton>
      </MenuBar>
      <ToolBar $h={23} role="toolbar" aria-label="Standard"><Tools items={standardTools} /></ToolBar>
      <ToolBar $h={22} role="toolbar" aria-label="Formatting">
        <Combo $w={116} $italic>
          <select aria-label="Font name" defaultValue="Calibri"><option>Calibri</option><option>Arial</option></select>
        </Combo>
        <Combo $w={56}>
          <select aria-label="Font size" defaultValue="16 pt"><option>16 pt</option><option>18 pt</option></select>
        </Combo>
        <Tools items={formatTools} />
      </ToolBar>
      <Body>
        <Main>
          <FormulaBar $h={25}>
            <Combo $w={91}>
              <select aria-label="Name box" defaultValue="A1:Q1"><option>A1:Q1</option></select>
            </Combo>
            <FormulaButton aria-label="Function wizard"><Icon name="fx" size={11} /></FormulaButton>
            <FormulaButton aria-label="Select function"><Icon name="sum" size={11} /></FormulaButton>
            <CaretButton aria-label="Select function options" />
            <FormulaButton aria-label="Formula"><Icon name="equals" size={9} /></FormulaButton>
            <FormulaInput aria-label="Input line" defaultValue="Resumo executivo: decisão rápida, caixa sob controle" />
            <ExpandButton aria-label="Expand formula bar" />
          </FormulaBar>
          <SheetArea>
            <Viewport>
              <Spreadsheet />
              <CashFlowChart />
              <CostChart />
              <RevenueChart />
              <ScenarioChart />
              <FreezeLine />
              <SelectionHandle />
            </Viewport>
            <VerticalScroll />
          </SheetArea>
          <HorizontalScroll />
          <TabBar>
            <NavButton aria-label="First sheet"><Icon name="first" size={11} /></NavButton>
            <NavButton aria-label="Previous sheet"><Icon name="prev" size={11} /></NavButton>
            <NavButton aria-label="Next sheet"><Icon name="next" size={11} /></NavButton>
            <NavButton aria-label="Last sheet"><Icon name="last" size={11} /></NavButton>
            <AddSheetButton aria-label="Add sheet"><Icon name="addSheet" size={12} /></AddSheetButton>
            <Tab>Premissas</Tab>
            <Tab>Projeção Financeira</Tab>
            <Tab $active>Resumo Executivo</Tab>
            <Tab>Instruções</Tab>
          </TabBar>
        </Main>
        <Sidebar aria-label="Sidebar">
          {panels.map(([icon, label]) => (
            <SideButton key={icon} aria-label={label}><Icon name={icon} /></SideButton>
          ))}
          <SideGrip />
        </Sidebar>
      </Body>
      <StatusBar>
        <StatusField $grow={19}><Icon name="diskGrey" size={11} /></StatusField>
        <StatusField $grow={131}>Sheet 3 of 4</StatusField>
        <StatusField $grow={181}>Selected: 1 row, 17 columns</StatusField>
        <StatusField $grow={188}>PageStyle_Resumo Executivo</StatusField>
        <StatusField $grow={140} $center $line>English (USA)</StatusField>
        <StatusField $grow={39} $line />
        <StatusField $grow={27} $center $line><Icon name="selectMode" size={14} /></StatusField>
        <StatusField $grow={16} $line />
        <StatusField $grow={17} $line />
        <StatusField $grow={152} $center $line>Average: ; Sum: 0</StatusField>
        <ZoomGroup>
          <ZoomStep aria-label="Zoom out">−</ZoomStep>
          <ZoomSlider type="range" aria-label="Zoom" min={0} max={100} defaultValue={50} />
          <ZoomStep aria-label="Zoom in">+</ZoomStep>
          <ZoomValue>100%</ZoomValue>
        </ZoomGroup>
      </StatusBar>
    </Shell>
  );
}
